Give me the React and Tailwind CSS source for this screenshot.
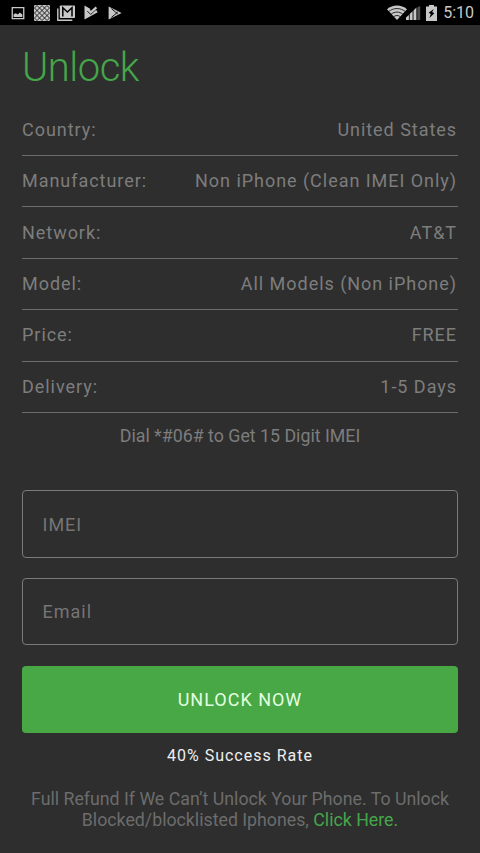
import React from 'react';

const details = [
  { label: 'Country:', value: 'United States' },
  { label: 'Manufacturer:', value: 'Non iPhone (Clean IMEI Only)' },
  { label: 'Network:', value: 'AT&T' },
  { label: 'Model:', value: 'All Models (Non iPhone)' },
  { label: 'Price:', value: 'FREE' },
  { label: 'Delivery:', value: '1-5 Days' },
];

const StatusBar = () => {
  return (
    <div className="flex h-[25px] items-center justify-between bg-black pl-[11px] pr-[6px] text-[#c8c8c8]">
      <div className="flex items-center">
        {/* Picture */}
        <svg className="h-[14px] w-[14px]" viewBox="0 0 14 14" fill="currentColor">
          <path fillRule="evenodd" d="M0.6 1h12.8v12.2H0.6zM1.9 2.3v9.6h10.2V2.3z" />
          <path d="M2.6 11V8.2l2.2-1 2 1.2 2-2 2.6 2V11z" />
        </svg>
        {/* Lattice */}
        <svg className="ml-[9px] h-4 w-4" viewBox="0 0 16 16">
          <rect width="16" height="16" rx="1.2" fill="currentColor" />
          <path
            d="M3 0.5L15.5 13M0.5 3L13 15.5M8 0.5L15.5 8M0.5 8L8 15.5M13 0.5l2.5 2.5M0.5 13L3 15.5M13 0.5L0.5 13M15.5 3L3 15.5M8 0.5L0.5 8M15.5 8L8 15.5M3 0.5L0.5 3M15.5 13L13 15.5"
            stroke="#1c1c1c"
            strokeWidth="0.95"
          />
        </svg>
        {/* Mail */}
        <svg className="ml-[7px] h-4 w-[18px]" viewBox="0 0 18 16" fill="none">
          <path d="M0.8 3.5V15.2h14.5" stroke="currentColor" strokeWidth="1.4" />
          <rect x="2.8" y="0.5" width="15.2" height="12.6" rx="0.8" fill="currentColor" />
          <path d="M5.8 11.5V2.8l4.6 4.2L15 2.8v8.7" stroke="#000" strokeWidth="1.5" />
        </svg>
        {/* Play store check */}
        <svg className="ml-[9px] h-[15px] w-[14px]" viewBox="0 0 14 15" fill="none">
          <path d="M0.5 0.5l6 3.6-2 2.2 2.4 2.6 5-4.4 1.8 2.8L0.5 14.5z" fill="currentColor" />
          <path d="M3.4 6l3.3 3.4 6-5.6" stroke="#000" strokeWidth="1" />
          <path d="M4.2 4.8l2.6 2.6L12.4 2.4" stroke="currentColor" strokeWidth="2.2" />
        </svg>
        {/* Play store */}
        <svg className="ml-[10px] h-[14px] w-[14px]" viewBox="0 0 14 14" fill="none">
          <path d="M0.6 0.6L13.6 7L0.6 13.4z" fill="currentColor" />
          <path d="M3.4 2.6l6.400 5.4M3.4 11.4l6.400-5.4" stroke="#000" strokeWidth="0.9" />
        </svg>
      </div>

      <div className="flex items-center">
        {/* Wifi */}
        <svg className="h-[15px] w-5" viewBox="0 0 20 15" fill="none">
          <path d="M0 4.2C6-0.8 14-0.8 20 4.2L10 15z" fill="currentColor" />
          <path d="M1.8 6.4c5-3.8 11.4-3.8 16.4 0M4.2 9.1c3.6-2.7 8-2.7 11.6 0M6.6 11.7c2.2-1.6 4.6-1.6 6.8 0" stroke="#000" strokeWidth="0.8" />
        </svg>
        {/* Signal */}
        <svg className="-ml-px h-[14px] w-[15px]" viewBox="0 0 15 14" fill="currentColor">
          <path d="M0 14v-2.4l2.9-2.7V14zM3.7 14V8.1l2.9-2.8V14zM7.5 14V4.4l2.9-2.8V14z" />
          <path d="M11.3 14V1.2L14.2 0v14z" opacity="0.4" />
        </svg>
        {/* Battery */}
        <svg className="ml-[5px] h-4 w-[11px]" viewBox="0 0 11 16" fill="currentColor">
          <path d="M3 0h5v1.6h3V16H0V1.6h3z" />
          <path d="M7.8 4L2.6 7.8l2.2 1.2L3.4 13l5-4.8-2.2-1.2z" fill="#000" />
        </svg>
        <span className="ml-[6px] text-base leading-[27px]">5:10</span>
      </div>
    </div>
  );
};

const Field = ({ label, type }) => {
  return (
    <input
      type={type}
      placeholder={label}
      className="block h-[67.4px] w-full rounded-[4px] border border-[#7b7b7b] bg-transparent px-[19.5px] text-lg tracking-[1px] text-[#7d7d7d] outline-none placeholder:text-[#757575]"
    />
  );
};

const App = () => {
  return (
    <div className="h-[853px] w-[480px] overflow-hidden bg-[#2e2e2e] font-['Roboto',sans-serif] text-lg text-[#7d7d7d]">
      <StatusBar />

      <main className="px-[22px] pt-[19px]">
        <h1 className="h-[60.6px] text-[40px] font-light leading-[48px] tracking-[-0.5px] text-[#45a64a]">Unlock</h1>

        <dl className="tracking-[0.96px]">
          {details.map((item) => (
            <div key={item.label} className="flex h-[51.4px] items-center justify-between border-b border-[#6c6c6c]">
              <dt>{item.label}</dt>
              <dd className="pr-px">{item.value}</dd>
            </div>
          ))}
        </dl>

        <p className="mt-[9.4px] text-center text-[17.8px] leading-[28px]">Dial *#06# to Get 15 Digit IMEI</p>

        <form className="mt-[40px] flex flex-col gap-[20.3px]">
          <Field label="IMEI" type="text" />
          <Field label="Email" type="email" />
          <button type="button" className="h-[67px] rounded-[4px] bg-[#48a846] pt-px tracking-[1px] text-[#e4ffe0]">
            UNLOCK NOW
          </button>
        </form>

        <p className="mt-[11px] text-center text-base leading-6 tracking-[1px] text-[#eeeeee]">40% Success Rate</p>

        <p className="mt-[21.5px] text-center text-[17.75px] leading-[21px] text-[#6c6c6c]">
          Full Refund If We Can’t Unlock Your Phone. To Unlock
          <br />
          Blocked/blocklisted Iphones, <a href="#" className="text-[#45a64a]">Click Here.</a>
        </p>
      </main>
    </div>
  );
};

export default App;
